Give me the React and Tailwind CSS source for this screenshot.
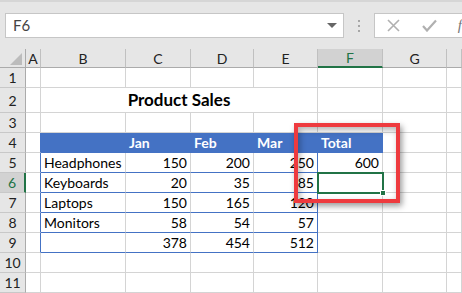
import React from 'react';

const W = { A: 'w-[15px]', B: 'w-[85px]', C: 'w-[65px]', D: 'w-[63px]', E: 'w-[64px]', F: 'w-[65px]', G: 'w-[64px]', H: 'w-[15px]' };
const COLS = ['A', 'B', 'C', 'D', 'E', 'F', 'G', 'H'];

function Cell({ col, className = '', children }) {
  return (
    <div className={`${W[col]} shrink-0 h-full border-r border-b border-[#d4d4d4] flex items-center whitespace-nowrap ${className}`}>
      {children}
    </div>
  );
}

function RowHead({ n, sel }) {
  return (
    <div
      className={`w-[26px] shrink-0 h-full border-b border-[#c8c8c8] flex items-center justify-center text-[14px] ${
        sel ? 'bg-[#d2d2d2] text-[#217346] border-r-2 border-r-[#217346]' : 'bg-[#e6e6e6] text-[#222] border-r border-r-[#ababab]'
      }`}
    >
      {n}
    </div>
  );
}

function Row({ n, tall, sel, children }) {
  return (
    <div className={`flex ${tall ? 'h-[25px]' : 'h-[20px]'}`}>
      <RowHead n={n} sel={sel} />
      {children}
    </div>
  );
}

function EmptyRow({ n }) {
  return (
    <Row n={n}>
      {COLS.map((c) => (
        <Cell key={c} col={c} />
      ))}
    </Row>
  );
}

const blueB = 'border-b-[#4472c4]';
const blueHead = 'bg-[#4472c4] border-r-[#4472c4] border-b-[#4472c4] pl-[3px] text-white font-bold';

function DataRow({ n, sel, label, c, d, e, f }) {
  return (
    <Row n={n} sel={sel}>
      <Cell col="A" className="border-r-[#4472c4]" />
      <Cell col="B" className={`${blueB} pl-[3px]`}>{label}</Cell>
      <Cell col="C" className={`${blueB} justify-end pr-[3px]`}>{c}</Cell>
      <Cell col="D" className={`${blueB} justify-end pr-[3px]`}>{d}</Cell>
      <Cell col="E" className={`${blueB} border-r-[#4472c4] justify-end pr-[3px]`}>{e}</Cell>
      <Cell col="F" className="justify-end pr-[3px]">{f}</Cell>
      <Cell col="G" />
      <Cell col="H" />
    </Row>
  );
}

export default function App() {
  return (
    <div className="relative w-[462px] h-[293px] overflow-hidden bg-white font-['Lato','Liberation_Sans',sans-serif] text-[14px] text-black">
      {/* Top bar */}
      <div className="h-[49px] bg-[#e6e6e6] border-t-2 border-[#d6d6d6] flex items-start pt-[11px] pl-[5px]">
        <div className="w-[339px] h-[25px] bg-white border border-[#c6c6c6] flex items-center pl-[7px] pr-[6px] text-[15px] text-[#444]">
          <span className="flex-1">F6</span>
          <svg width="10" height="6" viewBox="0 0 10 6">
            <path d="M0 0 H10 L5 5 Z" fill="#666" />
          </svg>
        </div>
        <div className="w-[30px] h-[25px] flex flex-col items-center justify-center gap-[3px]">
          <div className="w-[2px] h-[2px] bg-[#a6a6a6]" />
          <div className="w-[2px] h-[2px] bg-[#a6a6a6]" />
          <div className="w-[2px] h-[2px] bg-[#a6a6a6]" />
        </div>
        <div className="flex-1 h-[25px] bg-white border border-[#c6c6c6] border-r-0 flex items-center pl-[12px]">
          <svg width="13" height="13" viewBox="0 0 13 13">
            <path d="M1 1 L12 12 M12 1 L1 12" stroke="#b0b0b0" strokeWidth="1.6" />
          </svg>
          <svg width="15" height="13" viewBox="0 0 15 13" className="ml-[22px]">
            <path d="M1 7 L5 11.5 L14 1.5" stroke="#b0b0b0" strokeWidth="2.2" fill="none" />
          </svg>
          <span className="ml-[21px] italic text-[15px] text-[#777] font-['Liberation_Serif',serif]">f</span>
        </div>
      </div>

      {/* Column header */}
      <div className="flex h-[19px]">
        <div className="w-[26px] shrink-0 h-full bg-[#e6e6e6] border-r border-b border-[#ababab] flex items-end justify-end pr-[3px] pb-[2px]">
          <svg width="12" height="12" viewBox="0 0 12 12">
            <path d="M12 0 V12 H0 Z" fill="#bcbcbc" />
          </svg>
        </div>
        {COLS.map((c) => (
          <div
            key={c}
            className={`${W[c]} shrink-0 h-full border-r border-[#c0c0c0] flex items-center justify-center text-[14px] ${
              c === 'F' ? 'bg-[#d2d2d2] text-[#217346] border-b-2 border-b-[#217346]' : 'bg-[#e6e6e6] text-[#222] border-b border-b-[#ababab]'
            }`}
          >
            {c === 'H' ? '' : c}
          </div>
        ))}
      </div>

      <EmptyRow n={1} />
      <Row n={2} tall>
        <Cell col="A" />
        <div className="w-[277px] shrink-0 h-full border-r border-b border-[#d4d4d4] flex items-center justify-center font-bold text-[17px]">
          Product Sales
        </div>
        <Cell col="F" />
        <Cell col="G" />
        <Cell col="H" />
      </Row>
      <EmptyRow n={3} />
      <Row n={4}>
        <Cell col="A" className="border-r-[#4472c4]" />
        <Cell col="B" className={blueHead} />
        <Cell col="C" className={blueHead}>Jan</Cell>
        <Cell col="D" className={blueHead}>Feb</Cell>
        <Cell col="E" className={blueHead}>Mar</Cell>
        <Cell col="F" className={blueHead}>Total</Cell>
        <Cell col="G" />
        <Cell col="H" />
      </Row>
      <DataRow n={5} label="Headphones" c="150" d="200" e="250" f="600" />
      <DataRow n={6} sel label="Keyboards" c="20" d="35" e="85" />
      <DataRow n={7} label="Laptops" c="150" d="165" e="120" />
      <DataRow n={8} label="Monitors" c="58" d="54" e="57" />
      <DataRow n={9} label="" c="378" d="454" e="512" />
      <EmptyRow n={10} />
      <EmptyRow n={11} />

      {/* Selection F6 */}
      <div className="absolute left-[317px] top-[172px] w-[67px] h-[22px] border-2 border-[#217346]" />
      <div className="absolute left-[380px] top-[190px] w-[6px] h-[6px] bg-[#217346] border border-white" />

      {/* Red highlight */}
      <div className="absolute left-[294px] top-[123px] w-[106px] h-[80px] border-4 border-[#ee3a3e] shadow-[2px_3px_6px_rgba(0,0,0,0.4),inset_2px_3px_6px_rgba(0,0,0,0.3)]" />
    </div>
  );
}
